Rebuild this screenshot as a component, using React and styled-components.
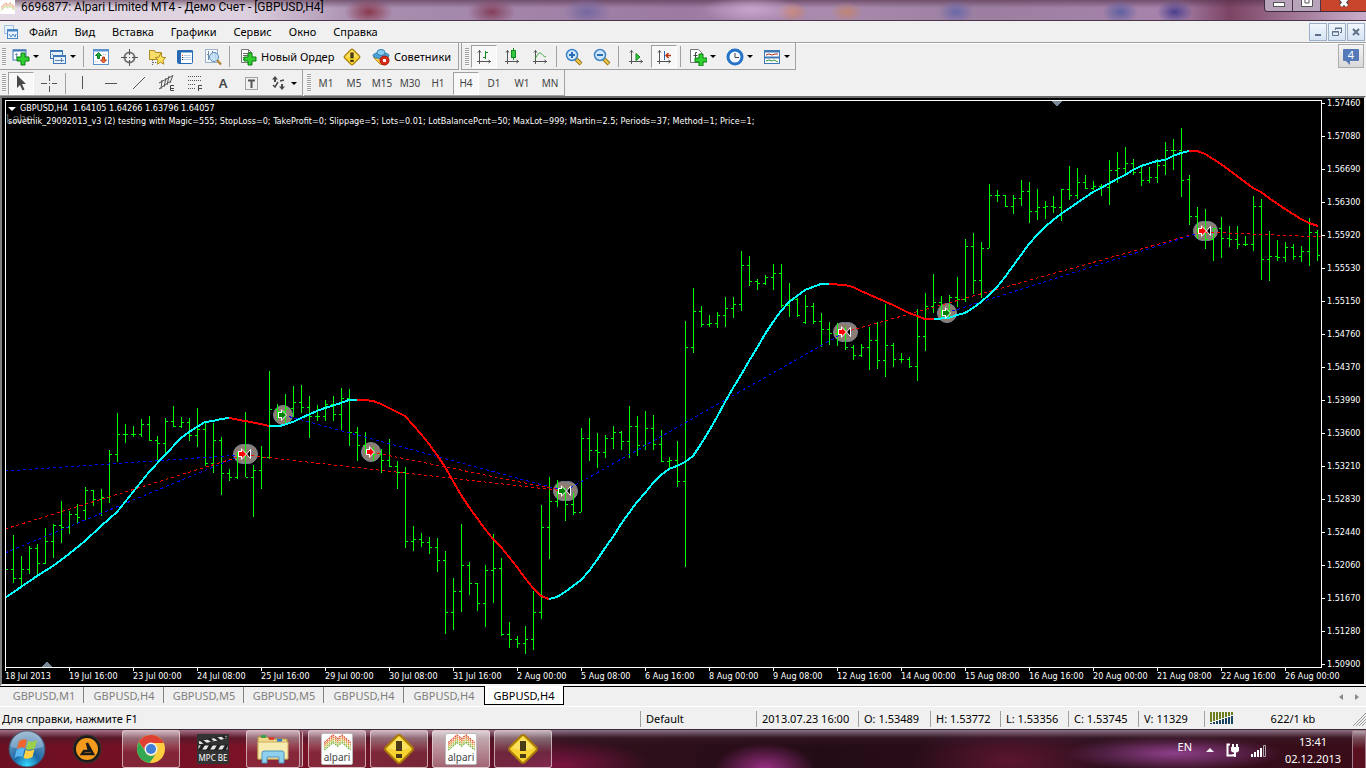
import React from "react";
import styled, { createGlobalStyle } from "styled-components";

// [high, low, close, open?] - open falls back to the previous close
const bars = [
  [563, 607, 569], [535, 583, 578], [556, 586, 569], [546, 574, 548], [544, 574, 563],
  [528, 564, 541], [524, 558, 525], [501, 543, 527], [511, 534, 514], [504, 523, 517],
  [487, 520, 490, 510], [490, 506, 499], [489, 516, 497], [450, 503, 454], [413, 462, 434],
  [424, 443, 434], [426, 437, 434], [419, 437, 424], [416, 441, 440], [436, 460, 443],
  [418, 455, 421], [406, 427, 426], [417, 428, 422], [418, 441, 435], [408, 447, 429],
  [423, 466, 463], [423, 473, 440], [437, 495, 473], [469, 481, 477], [452, 479, 455],
  [412, 477, 477], [465, 517, 470], [446, 489, 457], [371, 459, 409], [404, 420, 411],
  [394, 425, 408], [386, 417, 402], [385, 413, 407], [396, 438, 416], [405, 421, 416],
  [400, 421, 404], [396, 421, 414], [388, 430, 398], [389, 446, 432], [427, 461, 445],
  [432, 453, 450], [447, 461, 454], [449, 473, 460], [439, 467, 466], [461, 489, 472],
  [467, 548, 541], [526, 551, 539], [533, 547, 542], [537, 554, 547], [538, 572, 560],
  [551, 634, 612], [578, 630, 591], [524, 612, 565], [562, 595, 583], [583, 611, 603],
  [565, 627, 570], [534, 603, 568], [558, 636, 634], [622, 648, 639], [636, 648, 643],
  [626, 654, 639], [591, 650, 612], [505, 619, 527], [477, 559, 501], [480, 507, 493],
  [488, 521, 504], [493, 515, 512], [428, 512, 438], [418, 461, 450], [433, 468, 452],
  [435, 458, 438], [426, 449, 432], [431, 450, 441], [406, 458, 426], [416, 456, 445],
  [411, 450, 428], [415, 450, 444], [430, 462, 461], [457, 468, 460], [441, 487, 481],
  [321, 567, 347], [288, 353, 311], [306, 327, 324], [315, 327, 323], [312, 328, 315],
  [297, 327, 308], [297, 318, 304], [251, 311, 265], [256, 286, 281], [279, 290, 283],
  [275, 285, 277], [264, 290, 273], [264, 308, 305], [283, 317, 299], [298, 317, 315],
  [295, 324, 306, 322], [303, 324, 321], [313, 347, 329], [322, 345, 333], [323, 346, 332],
  [327, 350, 347], [345, 360, 355], [344, 357, 347], [327, 370, 340], [322, 369, 360],
  [304, 377, 345], [343, 367, 359], [353, 363, 359], [357, 368, 366], [309, 381, 336],
  [293, 351, 306], [274, 313, 302], [296, 317, 310], [295, 317, 297], [277, 307, 299],
  [239, 302, 246], [233, 294, 280], [242, 298, 248], [184, 248, 195], [190, 202, 195],
  [195, 207, 206], [195, 214, 198], [180, 206, 191], [182, 223, 211], [189, 220, 207],
  [201, 219, 206], [196, 213, 207], [189, 221, 189], [166, 200, 195], [168, 199, 182],
  [175, 189, 188], [181, 190, 186], [184, 196, 187], [160, 205, 170], [152, 183, 168],
  [147, 173, 163], [159, 175, 172], [167, 186, 180], [167, 183, 177], [159, 183, 165],
  [142, 175, 150], [139, 170, 150], [128, 197, 180], [175, 225, 216, 179], [207, 239, 231],
  [209, 249, 239], [228, 261, 228], [217, 258, 238], [226, 247, 239], [226, 249, 244],
  [236, 246, 244], [196, 251, 206], [199, 280, 259], [231, 281, 256], [240, 261, 257],
  [242, 262, 247], [244, 260, 256], [246, 262, 251], [218, 266, 232], [230, 261, 255],
];

const barPath = bars
  .map(([high, low, close, open], i) => {
    const x = 5 + i * 8;
    const o = open || (i > 0 ? bars[i - 1][2] : null);
    const left = o ? `M${x - 2} ${o}h2v1h-2z` : "";
    return `M${x} ${high}h1V${low}h-1z${left}M${x + 1} ${close}h2v1h-2z`;
  })
  .join("");

const averages = [
  { up: true, points: "5,598 21,587 37,576 53,566 69,554 85,541 101,526 117,512 133,492 149,472 165,455 181,438 189,432 197,427 205,422 213,421 221,419 230,418" },
  { up: false, points: "229,418 245,421 261,424 269,426" },
  { up: true, points: "269,426 280,426 293,422 301,418 317,411 325,408 341,403 349,400 357,400" },
  { up: false, points: "357,400 365,400 373,401 381,404 389,408 405,416 413,425 421,434 429,444 437,455 445,467 453,481 461,495 469,507 477,518 485,529 493,539 501,547 509,557 517,567 525,578 533,588 541,596 549,599" },
  { up: true, points: "549,599 557,597 565,592 581,580 589,571 597,560 605,548 613,537 621,524 629,513 637,502 645,493 653,483 661,475 669,469 677,466 685,462 693,456 701,444 709,431 717,417 725,402 733,388 741,375 749,361 757,348 765,334 773,322 781,311 789,302 797,296 805,290 813,287 821,284 829,284" },
  { up: false, points: "829,284 845,285 853,287 861,291 877,298 893,305 909,313 917,316 925,319 934,319" },
  { up: true, points: "934,319 949,318 957,315 965,313 973,308 981,302 989,295 997,287 1005,277 1013,266 1021,255 1029,244 1037,235 1045,227 1053,220 1061,214 1077,203 1093,192 1101,188 1117,179 1125,175 1133,170 1141,166 1157,161 1165,160 1173,156 1181,153 1189,151" },
  { up: false, points: "1189,151 1197,151 1205,154 1213,159 1221,164 1237,176 1253,188 1261,192 1269,198 1285,209 1301,219 1309,223 1318,226" },
];

const trades = [
  ["blue", 5, 471, 242, 455],
  ["red", 5, 529, 245, 455],
  ["blue", 5, 553, 240, 456],
  ["red", 245, 455, 565, 491],
  ["blue", 283, 415, 565, 491],
  ["red", 371, 452, 565, 491],
  ["blue", 565, 491, 845, 332],
  ["red", 845, 332, 1205, 231],
  ["blue", 946, 313, 1205, 231],
  ["red", 1205, 232, 1321, 237],
];

const markers = [
  { x: 283, y: 415, color: "green" },
  { x: 243, y: 454, color: "red", exit: true },
  { x: 371, y: 452, color: "red" },
  { x: 563, y: 491, color: "green", exit: true },
  { x: 843, y: 332, color: "red", exit: true },
  { x: 947, y: 313, color: "green" },
  { x: 1203, y: 231, color: "red", exit: true },
];

const prices = [
  "1.57460", "1.57080", "1.56690", "1.56300", "1.55920", "1.55530", "1.55150", "1.54760", "1.54370",
  "1.53990", "1.53600", "1.53210", "1.52830", "1.52440", "1.52060", "1.51670", "1.51280", "1.50900",
];

const dates = [
  "18 Jul 2013", "19 Jul 16:00", "23 Jul 00:00", "24 Jul 08:00", "25 Jul 16:00", "29 Jul 00:00",
  "30 Jul 08:00", "31 Jul 16:00", "2 Aug 00:00", "5 Aug 08:00", "6 Aug 16:00", "8 Aug 00:00",
  "9 Aug 08:00", "12 Aug 16:00", "14 Aug 00:00", "15 Aug 08:00", "16 Aug 16:00", "20 Aug 00:00",
  "21 Aug 08:00", "22 Aug 16:00", "26 Aug 00:00",
];

const menus = ["Файл", "Вид", "Вставка", "Графики", "Сервис", "Окно", "Справка"];
const periods = ["M1", "M5", "M15", "M30", "H1", "H4", "D1", "W1", "MN"];
const tabs = ["GBPUSD,M1", "GBPUSD,H4", "GBPUSD,M5", "GBPUSD,M5", "GBPUSD,H4", "GBPUSD,H4", "GBPUSD,H4"];

const Icon = ({ size = 18, children }) => (
  <svg width={size} height={size} viewBox={`0 0 ${size} ${size}`} aria-hidden="true">
    {children}
  </svg>
);

const Plus = ({ x = 6, y = 6 }) => (
  <path
    d={`M${x + 4} ${y}h4v4h4v4h-4v4h-4v-4h-4v-4h4z`}
    fill="#2fd02f"
    stroke="#0a7d12"
  />
);

const Axes = () => (
  <path d="M4.500 2v14M2 13.500h14M3 4.500l1.500-2 1.500 2M13.500 12l2 1.500-2 1.500" fill="none" stroke="#555" />
);

const NewChart = () => (
  <Icon>
    <rect x="1" y="2" width="13" height="10" fill="#fff" stroke="#3d77b5" />
    <path d="M1 2.500h13" stroke="#3d77b5" strokeWidth="2" />
    <path d="M4.500 5v5M3 6.500h3" stroke="#7d9bb8" />
    <Plus x={5} y={5} />
  </Icon>
);

const Profiles = () => (
  <Icon>
    <rect x="1.500" y="2.500" width="12" height="8" fill="#e8f1fa" stroke="#3d77b5" />
    <path d="M1 3h13" stroke="#3d77b5" strokeWidth="2" />
    <rect x="4.500" y="7.500" width="12" height="8" fill="#e8f1fa" stroke="#3d77b5" />
    <path d="M4 8h13" stroke="#3d77b5" strokeWidth="2" />
    <path d="M3 6.500h1M6 12.500h9M12.500 10v4" stroke="#5d86ae" />
  </Icon>
);

const MarketWatch = () => (
  <Icon>
    <rect x="1.500" y="1.500" width="15" height="15" fill="#fff" stroke="#5b93cf" />
    <path d="M1 2.500h16" stroke="#5b93cf" strokeWidth="2" />
    <path d="M6.500 4.500l3 3h-2v3h-2v-3h-2z" fill="#1fae3a" stroke="#0b7a24" />
    <path d="M11.500 15l3-3h-2V9h-2v3h-2z" fill="#f0703a" stroke="#b83c12" />
    <path d="M11 6.500h4M3 13.500h4" stroke="#bbb" strokeDasharray="1 1" />
  </Icon>
);

const DataWindow = () => (
  <Icon>
    <circle cx="9.500" cy="9.500" r="5" fill="none" stroke="#777" strokeWidth="2" />
    <path d="M9.500 1v6M9.500 12v6M1 9.500h6M12 9.500h6" stroke="#555" />
    <path d="M9 9.500h1" stroke="#555" />
  </Icon>
);

const Navigator = () => (
  <Icon>
    <path d="M1.500 2.500h5l1 2h6v7h-12z" fill="#f7dd6a" stroke="#b08a1e" />
    <path d="M4.500 12v5M5 14.500h3" stroke="#666" strokeDasharray="1 1" />
    <path d="M12.500 5.500l1.600 3.700 3.600.4-2.700 2.600.8 4-3.300-2-3.300 2 .8-4-2.700-2.600 3.600-.4z" fill="#ffe45c" stroke="#b08a1e" />
  </Icon>
);

const Terminal = () => (
  <Icon>
    <rect x="1.500" y="2.500" width="15" height="13" rx="1" fill="#fff" stroke="#2769b3" />
    <path d="M1 3.500h16" stroke="#2769b3" strokeWidth="2" />
    <path d="M3.500 3v12" stroke="#2769b3" strokeWidth="3" />
    <path d="M6 7.500h1" stroke="#e03030" />
    <path d="M8 7.500h7M6 9.500h9M6 11.500h9" stroke="#b9cbe0" />
    <path d="M6 9.500h1M6 11.500h1" stroke="#333" />
  </Icon>
);

const Tester = () => (
  <Icon>
    <rect x="1.500" y="1.500" width="12" height="13" fill="#f5f8fb" stroke="#9db2c9" />
    <path d="M4.500 3v9M8.500 3v6M11.500 4v7M3 6.500h2M7 5.500h2" stroke="#7089a3" />
    <circle cx="10" cy="9" r="4.500" fill="#bfe0f8" fillOpacity=".85" stroke="#5d8fbf" />
    <path d="M13 12l4 4.500" stroke="#b08a3c" strokeWidth="2.500" />
  </Icon>
);

const NewOrder = () => (
  <Icon>
    <path d="M2.500 1.500h7l3 3v10h-10z" fill="#fff" stroke="#777" />
    <path d="M4 5.500h5M4 7.500h6M4 9.500h6M4 11.500h3" stroke="#666" />
    <path d="M9.500 1.500v3h3" fill="none" stroke="#777" />
    <Plus x={5} y={5} />
  </Icon>
);

const Warning = ({ size = 18 }) => (
  <svg width={size} height={size} viewBox="0 0 32 32" aria-hidden="true">
    <path d="M16 2q1 0 2 1l11 11q2 2 0 4L18 29q-2 2-4 0L3 18q-2-2 0-4L14 3q1-1 2-1z" fill="#f6d330" stroke="#a8790a" strokeWidth="2" />
    <path d="M16 4l11 11q-11 4-22 0z" fill="#ffef8c" opacity=".55" />
    <path d="M13 8h6v10h-6zM13 21h6v4h-6z" fill="#4a3a16" />
  </svg>
);

const Advisors = () => (
  <Icon>
    <path d="M1.500 9.500l7 7h4l4-7z" fill="#f5cf45" stroke="#b58a1e" />
    <ellipse cx="9" cy="7.500" rx="8" ry="3" fill="#4ba3d8" stroke="#2c7fb5" />
    <ellipse cx="9" cy="4.500" rx="4" ry="3" fill="#8acbf0" stroke="#2c7fb5" />
    <circle cx="12.500" cy="12.500" r="4.500" fill="#dc2a1a" stroke="#a51408" />
    <rect x="11" y="11" width="3" height="3" fill="#fff" />
  </Icon>
);

const BarChart = () => (
  <Icon>
    <Axes />
    <path d="M10.500 3v8M8 9.500h2M11 4.500h2" stroke="#118a1e" />
  </Icon>
);

const Candles = () => (
  <Icon>
    <Axes />
    <path d="M10.500 0v12" stroke="#118a1e" />
    <rect x="8.500" y="2.500" width="4" height="7" fill="#33c63f" stroke="#118a1e" />
  </Icon>
);

const LineChart = () => (
  <Icon>
    <Axes />
    <path d="M4 11c2-3 3-6 5-6s2 3 6 4" fill="none" stroke="#33a03c" />
  </Icon>
);

const Magnifier = ({ minus }) => (
  <Icon>
    <path d="M11 11l5 5" stroke="#9a7414" strokeWidth="4" />
    <path d="M11.500 11.500l4 4" stroke="#f2cf4a" strokeWidth="2" />
    <circle cx="7" cy="7" r="5.500" fill="#cfe7fb" stroke="#3c83c8" strokeWidth="1.500" />
    <path d={minus ? "M4 7h6" : "M4 7h6M7 4v6"} stroke="#2a6cb5" strokeWidth="2" />
  </Icon>
);

const AutoScroll = () => (
  <Icon>
    <Axes />
    <path d="M9 5.500l4 3.500-4 3.500z" fill="#33c63f" stroke="#118a1e" />
  </Icon>
);

const ChartShift = () => (
  <Icon>
    <Axes />
    <path d="M9.500 3v9" stroke="#2769b3" />
    <path d="M16 7.500h-5M13.500 5l-2.500 2.500 2.500 2.500" fill="none" stroke="#b8330f" strokeWidth="1.500" />
  </Icon>
);

const Indicators = () => (
  <Icon>
    <path d="M1.500 1.500h8l3 3v10h-11z" fill="#fff" stroke="#777" />
    <path d="M8 4.500H6.500V12M4.500 7.500h4" fill="none" stroke="#444" />
    <Plus x={6} y={6} />
  </Icon>
);

const Clock = () => (
  <Icon>
    <circle cx="9" cy="9" r="7" fill="#f4f9fe" stroke="#2473c8" strokeWidth="3" />
    <path d="M9 5v4.500h4" fill="none" stroke="#444" />
  </Icon>
);

const Templates = () => (
  <Icon>
    <rect x="1.500" y="2.500" width="15" height="13" fill="#fff" stroke="#3d77b5" />
    <path d="M1 3.500h16M1 9.500h16" stroke="#3d77b5" strokeWidth="2" />
    <path d="M3 7l3-1 3 1 3-1h3" fill="none" stroke="#b03020" />
    <path d="M3 13l3-1 3 1 2-1 4 2" fill="none" stroke="#33923c" />
  </Icon>
);

const Cursor = () => (
  <Icon>
    <path d="M5 1v13l3-3 2.500 5.500 2-1L10 10h4z" fill="#4a4a4a" />
  </Icon>
);

const Crosshair = () => (
  <Icon>
    <path d="M9.500 1v6M9.500 12v6M1 9.500h6M12 9.500h5M9 9.500h1" stroke="#555" />
  </Icon>
);

const VLine = () => (
  <Icon>
    <path d="M8.500 2v13" stroke="#555" />
  </Icon>
);

const HLine = () => (
  <Icon>
    <path d="M3 9.500h12" stroke="#555" />
  </Icon>
);

const TrendLine = () => (
  <Icon>
    <path d="M3 15L15 3" stroke="#555" />
  </Icon>
);

const Channel = () => (
  <Icon>
    <path d="M1 9L14 2M1 15l12-8M4 6l-1 9M8 4L6 13M11 2L9 11M15 1l-3 8" fill="none" stroke="#555" />
    <path d="M16 11.500h-3.500v5H16M13 14.500h3" fill="none" stroke="#444" />
  </Icon>
);

const Fibo = () => (
  <Icon>
    <path d="M2 2.500h14M2 6.500h14M2 10.500h8M2 14.500h8" stroke="#555" strokeDasharray="1 1" />
    <path d="M12.500 17v-5.500H16M13 14.500h3" fill="none" stroke="#444" />
  </Icon>
);

const LabelTool = () => (
  <Icon>
    <rect x="3.500" y="3.500" width="12" height="12" fill="none" stroke="#555" strokeDasharray="1 1" />
    <path d="M6 6.500h7M9.500 6v8" stroke="#555" strokeWidth="2" />
  </Icon>
);

const Arrows = () => (
  <Icon>
    <path d="M5 2l3 3.500h-2V8H4V5.500H2z" fill="#4a4a4a" />
    <path d="M12 16l3-3.500h-2V10h-2v2.500H9z" fill="#4a4a4a" />
    <path d="M3 11l2 2 3-5M10 7l4-1" fill="none" stroke="#4a4a4a" strokeWidth="1.500" />
  </Icon>
);

const AlpariWaves = ({ width, height }) => (
  <svg width={width} height={height} viewBox="0 0 30 20" aria-hidden="true">
    {["#dc4420", "#e66a2c", "#d9a034", "#a8b93a", "#6fae34"].map((color, i) => (
      <path
        key={color}
        d={`M1 ${9 + i * 2}l6-5 3-3 3 2 2 2 2-2 3-2 3 3 6 5`}
        fill="none"
        stroke={color}
        strokeWidth="1.200"
        strokeDasharray="2 1"
      />
    ))}
  </svg>
);

const Orb = () => (
  <svg width="38" height="38" viewBox="0 0 38 38" aria-hidden="true">
    <defs>
      <radialGradient id="orb" cx=".5" cy=".95" r=".9">
        <stop offset="0" stopColor="#36d9ff" />
        <stop offset=".4" stopColor="#1b6aa8" />
        <stop offset="1" stopColor="#7fa3c4" />
      </radialGradient>
    </defs>
    <circle cx="19" cy="19" r="18" fill="url(#orb)" stroke="#3c4f63" />
    <path d="M3 17a16 16 0 0132 0q-16 5-32 0z" fill="#fff" opacity=".25" />
    <path d="M11 11q4-3 8-1l-2 8q-4-2-8 1z" fill="#f0642d" />
    <path d="M20 11q5 2 9-1l-2 8q-5 3-9 1z" fill="#9bd04a" />
    <path d="M8.500 20q4-3 8-1l-2 8q-4-2-8 1z" fill="#5bb5f0" />
    <path d="M17.500 20q5 2 9-1l-2 8q-5 3-9 1z" fill="#ffd044" />
  </svg>
);

const Aimp = () => (
  <svg width="30" height="30" viewBox="0 0 30 30" aria-hidden="true">
    <circle cx="15" cy="15" r="14" fill="#1d1b1a" stroke="#3a3533" />
    <circle cx="15" cy="15" r="11" fill="#f39a1c" />
    <path d="M15 9l6 11H10l2-3h5z" fill="none" stroke="#1d1b1a" strokeWidth="2.500" />
  </svg>
);

const Chrome = () => (
  <svg width="30" height="30" viewBox="0 0 30 30" aria-hidden="true">
    <circle cx="15" cy="15" r="14" fill="#ffcd40" />
    <path d="M2.900 8A14 14 0 0127.600 9H15a6 6 0 00-5.500 8z" fill="#de4032" />
    <path d="M2.900 8a14 14 0 0010.600 21l6.500-9a6 6 0 01-10.200-2z" fill="#35a853" />
    <circle cx="15" cy="15" r="6.500" fill="#f2f2f2" />
    <circle cx="15" cy="15" r="5" fill="#3f7fd6" />
  </svg>
);

const Explorer = () => (
  <svg width="32" height="30" viewBox="0 0 32 30" aria-hidden="true">
    <path d="M1 3h9l2 2h18v20H1z" fill="#efd98b" stroke="#b89b48" />
    <path d="M4 1h5v3H4z" fill="#3aa04a" />
    <path d="M12 3h5v3h-5z" fill="#d8452e" />
    <path d="M20 5h5v3h-5z" fill="#2f7fd0" />
    <path d="M1 8h30v17H1z" fill="#f8ebb0" stroke="#c9ad5c" />
    <path d="M5 29V19q0-2 2-2h18q2 0 2 2v10h-5v-6H10v6z" fill="#8fd0ee" stroke="#4c96bd" />
  </svg>
);

const Clapper = () => (
  <svg width="32" height="17" viewBox="0 0 32 17" aria-hidden="true">
    <path d="M1 7L30 1v4L2 11z" fill="#e8e8e8" stroke="#222" />
    <path d="M3 7l4 3 3-1-4-3zM10 5l4 3 3-1-4-3zM17 4l4 3 3-1-4-3zM24 2l3 3 3-1-3-3z" fill="#222" />
    <path d="M1 11h30v5H1z" fill="#e8e8e8" stroke="#222" />
    <path d="M4 11h4l-3 5H1zM12 11h4l-3 5H9zM20 11h4l-3 5h-4zM28 11h3l-2 5h-4z" fill="#222" />
  </svg>
);

const ChatBubble = () => (
  <svg width="18" height="18" viewBox="0 0 18 18" aria-hidden="true">
    <path d="M1 2q0-1 1-1h14q1 0 1 1v10q0 1-1 1H8v4l-4-4H2q-1 0-1-1z" fill="#5478b8" />
  </svg>
);

const Volume = () => (
  <svg width="24" height="13" viewBox="0 0 24 13" shapeRendering="crispEdges" aria-hidden="true">
    {[0, 1, 2, 3, 4, 5, 6, 7].map((n) => (
      <g key={n}>
        <rect x={n * 3} y="0" width="2" height={10 - n} fill="#6b7d1c" />
        <rect x={n * 3} y={11 - n} width="2" height={n + 1} fill="#1c4560" />
      </g>
    ))}
  </svg>
);

const Marker = ({ x, y, color, exit }) => (
  <g transform={`translate(${x} ${y})`}>
    {exit && <path d="M7.500-4.500v9l-4-4.500z" fill="#000" stroke="#fff" />}
    <path d="M-5-3h3v-3l6 6-6 6v-3h-3z" fill="#fff" />
    <path d="M-4-2h3v-2l4 4-4 4v-2h-3z" fill={color} />
  </g>
);

const PriceChart = () => (
  <ChartSvg viewBox="6 101 1315 566" role="img" aria-label="GBPUSD,H4">
    {markers.map((m) => (
      <g key={m.x} fill="#8f7c70" stroke="#77879a">
        {m.exit && <circle cx={m.x + 5} cy={m.y} r="9.500" />}
        <circle cx={m.x} cy={m.y} r="9.500" />
      </g>
    ))}
    <g shapeRendering="crispEdges">
      <path d={barPath} fill="#0f0" />
      {trades.map(([color, x1, y1, x2, y2]) => (
        <line key={`${color}${x1}-${y1}`} x1={x1} y1={y1} x2={x2} y2={y2} stroke={color} strokeDasharray="3 3" />
      ))}
      {averages.map(({ up, points }) => (
        <polyline key={points} points={points} fill="none" stroke={up ? "#0ff" : "#f00"} strokeWidth="2" />
      ))}
      <path d="M1051 101h11l-5 5h-1z" fill="#778899" />
      <path d="M41 667h11l-5-5h-1z" fill="#778899" />
    </g>
    {markers.map((m) => (
      <Marker key={m.x} {...m} />
    ))}
  </ChartSvg>
);

const App = () => {
  return (
    <>
      <GlobalStyle />
      <Page>
        <TitleBar>
          <TitleIcon>
            <AlpariWaves width={14} height={12} />
          </TitleIcon>
          <Title>6696877: Alpari Limited MT4 - Демо Счет - [GBPUSD,H4]</Title>
          <WindowButtons>
            <WindowButton aria-label="Свернуть">
              <svg width="12" height="7" viewBox="0 0 12 7">
                <rect x=".5" y="2.500" width="11" height="4" fill="#fff" stroke="#555" />
              </svg>
            </WindowButton>
            <WindowButton aria-label="Развернуть">
              <svg width="12" height="7" viewBox="0 0 12 7">
                <path d="M.5 0v6.500h11V0M4 0v3h4V0" fill="#fff" stroke="#555" />
              </svg>
            </WindowButton>
            <WindowButton $close aria-label="Закрыть">
              <svg width="12" height="7" viewBox="0 0 12 7">
                <path d="M3-1l6 7M9-1L3 6" stroke="#444" strokeWidth="5" />
                <path d="M3-1l6 7M9-1L3 6" stroke="#fff" strokeWidth="3" />
              </svg>
            </WindowButton>
          </WindowButtons>
        </TitleBar>

        <MenuBar>
          <Icon size={16}>
            <rect x="1.500" y="1.500" width="9" height="8" fill="#eaf3fc" stroke="#5b93cf" strokeDasharray="1 1" />
            <rect x="4.500" y="5.500" width="10" height="9" fill="#eaf3fc" stroke="#4a87c8" />
            <path d="M4 6.500h11" stroke="#4a87c8" strokeWidth="2" />
            <path d="M6 10l2 3 2-3 2 3 1-3" fill="none" stroke="#4a87c8" />
          </Icon>
          <MenuItems>
            {menus.map((name) => (
              <MenuItem key={name}>{name}</MenuItem>
            ))}
          </MenuItems>
          <MdiButton aria-label="Свернуть график">
            <Icon size={12}>
              <path d="M3 9h6" stroke="#5d7088" strokeWidth="2" />
            </Icon>
          </MdiButton>
          <MdiButton aria-label="Восстановить график">
            <Icon size={12}>
              <path d="M4.500 4V2.500h6v4H9M4 2h7M1.500 5.500h6v4h-6zM1 6h7" fill="none" stroke="#5d7088" />
            </Icon>
          </MdiButton>
          <MdiButton aria-label="Закрыть график">
            <Icon size={12}>
              <path d="M3 3l6 6M9 3L3 9" stroke="#5d7088" strokeWidth="2" />
            </Icon>
          </MdiButton>
        </MenuBar>

        <ToolRow $tall>
          <Toolbar>
            <Grip />
            <ToolButton $drop aria-label="Новый график"><NewChart /></ToolButton>
            <ToolButton $drop aria-label="Профили"><Profiles /></ToolButton>
            <Divider />
            <ToolButton aria-label="Обзор рынка"><MarketWatch /></ToolButton>
            <ToolButton aria-label="Окно данных"><DataWindow /></ToolButton>
            <ToolButton aria-label="Навигатор"><Navigator /></ToolButton>
            <ToolButton aria-label="Терминал"><Terminal /></ToolButton>
            <ToolButton aria-label="Тестер"><Tester /></ToolButton>
            <Divider />
            <TextButton $width={105}><NewOrder />Новый Ордер</TextButton>
            <ToolButton aria-label="Предупреждение"><Warning /></ToolButton>
            <TextButton $width={92}><Advisors />Советники</TextButton>
          </Toolbar>
          <Toolbar $edge>
            <Grip />
            <ToolButton $pressed aria-label="Бары"><BarChart /></ToolButton>
            <ToolButton aria-label="Японские свечи"><Candles /></ToolButton>
            <ToolButton aria-label="Линия"><LineChart /></ToolButton>
            <Divider />
            <ToolButton aria-label="Увеличить"><Magnifier /></ToolButton>
            <ToolButton aria-label="Уменьшить"><Magnifier minus /></ToolButton>
            <Divider />
            <ToolButton aria-label="Автопрокрутка"><AutoScroll /></ToolButton>
            <ToolButton $pressed aria-label="Сдвиг графика"><ChartShift /></ToolButton>
            <Divider />
            <ToolButton $drop aria-label="Индикаторы"><Indicators /></ToolButton>
            <ToolButton $drop aria-label="Периоды"><Clock /></ToolButton>
            <ToolButton $drop aria-label="Шаблоны"><Templates /></ToolButton>
          </Toolbar>
          <ChatButton>
            <ChatBubble />
            <ChatCount>4</ChatCount>
          </ChatButton>
        </ToolRow>

        <ToolRow>
          <Toolbar>
            <Grip />
            <ToolButton $pressed aria-label="Курсор"><Cursor /></ToolButton>
            <ToolButton aria-label="Перекрестие"><Crosshair /></ToolButton>
            <Divider />
            <ToolButton aria-label="Вертикальная линия"><VLine /></ToolButton>
            <ToolButton aria-label="Горизонтальная линия"><HLine /></ToolButton>
            <ToolButton aria-label="Трендовая линия"><TrendLine /></ToolButton>
            <ToolButton aria-label="Канал"><Channel /></ToolButton>
            <ToolButton aria-label="Фибоначчи"><Fibo /></ToolButton>
            <ToolButton $bold>A</ToolButton>
            <ToolButton aria-label="Метка"><LabelTool /></ToolButton>
            <ToolButton $drop aria-label="Стрелки"><Arrows /></ToolButton>
          </Toolbar>
          <Toolbar>
            <Grip />
            {periods.map((period) => (
              <ToolButton key={period} $pressed={period === "H4"}>{period}</ToolButton>
            ))}
          </Toolbar>
        </ToolRow>

        <ChartWindow>
          <ChartRow>
            <Plot>
              <PriceChart />
              <ChartLabel>Label</ChartLabel>
              <ChartCaption>
                <span><Caret />GBPUSD,H4&nbsp; 1.64105 1.64266 1.63796 1.64057</span>
                <span>
                  sovetnik_29092013_v3 (2) testing with Magic=555; StopLoss=0; TakeProfit=0; Slippage=5; Lots=0.01;
                  LotBalancePcnt=50; MaxLot=999; Martin=2.5; Periods=37; Method=1; Price=1;
                </span>
              </ChartCaption>
            </Plot>
            <PriceAxis>
              {prices.map((price) => (
                <Price key={price}>{price}</Price>
              ))}
            </PriceAxis>
          </ChartRow>
          <TimeAxis>
            {dates.map((date) => (
              <Time key={date}>{date}</Time>
            ))}
          </TimeAxis>
        </ChartWindow>

        <TabBar>
          {tabs.map((name, i) => (
            <Tab key={i} $active={i === 6} $last={i === 5}>{name}</Tab>
          ))}
          <TabScroll>
            <Icon size={8}><path d="M6 1v6L2 4z" fill="#8a8a8a" /></Icon>
            <Icon size={8}><path d="M2 1v6l4-3z" fill="#8a8a8a" /></Icon>
          </TabScroll>
        </TabBar>

        <StatusBar>
          <StatusHelp>Для справки, нажмите F1</StatusHelp>
          <StatusCell $width={116}>Default</StatusCell>
          <StatusCell $width={102}>2013.07.23 16:00</StatusCell>
          <StatusCell $width={72}>O: 1.53489</StatusCell>
          <StatusCell $width={70}>H: 1.53772</StatusCell>
          <StatusCell $width={68}>L: 1.53356</StatusCell>
          <StatusCell $width={70}>C: 1.53745</StatusCell>
          <StatusCell $width={66}>V: 11329</StatusCell>
          <StatusCell $width={162}>
            <Volume />
            <Traffic>622/1 kb</Traffic>
            <Icon size={14}>
              <path d="M1 14L14 1M4 14L14 4M7 14l7-7M10 14l4-4" stroke="#999" />
            </Icon>
          </StatusCell>
        </StatusBar>

        <TaskBar>
          <TaskItem $plain $width={50} aria-label="Пуск"><Orb /></TaskItem>
          <TaskItem $plain $width={62} aria-label="AIMP"><Aimp /></TaskItem>
          <TaskItem aria-label="Chrome"><Chrome /></TaskItem>
          <TaskItem $plain>
            <Mpc>
              <Clapper />
              <span>MPC BE</span>
            </Mpc>
          </TaskItem>
          <TaskItem $stack $width={54} aria-label="Проводник"><Explorer /></TaskItem>
          <TaskItem>
            <AlpariTile>
              <AlpariWaves width={29} height={19} />
              alpari
            </AlpariTile>
          </TaskItem>
          <TaskItem aria-label="Терминал"><Warning size={32} /></TaskItem>
          <TaskItem $active>
            <AlpariTile>
              <AlpariWaves width={29} height={19} />
              alpari
            </AlpariTile>
          </TaskItem>
          <TaskItem aria-label="Терминал"><Warning size={32} /></TaskItem>
          <Tray>
            <Lang>EN</Lang>
            <Icon size={8}><path d="M0 6l4-4 4 4z" fill="#eee" /></Icon>
            <Icon size={16}>
              <path d="M6 2.500H3.500v11h6V12" fill="none" stroke="#fff" strokeWidth="2" />
              <path d="M7 5h8v3q0 2-3 2.500V15h-2v-4.500Q7 10 7 8zM8 2h2v3H8zM12 2h2v3h-2z" fill="#fff" />
            </Icon>
            <Icon size={16}>
              <path d="M1 12h2v3H1zM4 10h2v5H4zM7 8h2v7H7zM10 6h2v9h-2z" fill="#fff" />
              <path d="M13.500 3.500h2v11h-2z" fill="none" stroke="#aaa" />
            </Icon>
            <TrayClock>
              <span>13:41</span>
              <span>02.12.2013</span>
            </TrayClock>
          </Tray>
          <ShowDesktop aria-label="Рабочий стол" />
        </TaskBar>
      </Page>
    </>
  );
};

const GlobalStyle = createGlobalStyle`
  * {
    box-sizing: border-box;
  }
  body {
    margin: 0;
    background: #f0f0f0;
    color: #000;
    font-family: "Noto Sans", "Liberation Sans", sans-serif;
    font-size: 11px;
  }
  button {
    margin: 0;
    padding: 0;
    border: none;
    background: none;
    color: inherit;
    font: inherit;
  }
  svg {
    display: block;
    flex: none;
  }
`;
const Page = styled.div`
  display: flex;
  flex-direction: column;
  min-height: 100vh;
`;
const TitleBar = styled.header`
  display: flex;
  align-items: flex-start;
  height: 21px;
  border-bottom: 1px solid #4a3548;
  background:
    radial-gradient(ellipse 24px 14px at 27% 60%, #8a3a4e 0%, transparent 100%),
    radial-gradient(ellipse 24px 14px at 36% 60%, #84405c 0%, transparent 100%),
    radial-gradient(ellipse 24px 14px at 43% 60%, #7468a0 0%, transparent 100%),
    radial-gradient(ellipse 50px 14px at 55% 50%, #c8a4cc 0%, transparent 100%),
    radial-gradient(ellipse 16px 10px at 58% 60%, #c88470 0%, transparent 100%),
    radial-gradient(ellipse 16px 10px at 62% 60%, #c08474 0%, transparent 100%),
    radial-gradient(ellipse 18px 12px at 70% 60%, #6a68a8 0%, transparent 100%),
    radial-gradient(ellipse 18px 12px at 82% 60%, #5f5fa0 0%, transparent 100%),
    radial-gradient(ellipse 18px 12px at 86% 60%, #4a3f8c 0%, transparent 100%),
    linear-gradient(to bottom, rgba(80, 45, 70, 0.6) 0, rgba(80, 45, 70, 0) 8px),
    linear-gradient(to right, #e6dce8 0, #ddd0de 18%, #a98fb0 26%, #9c7aa2 50%, #a98bae 60%, #9c7fa0 72%, #a783ac 86%, #7c4464 90%, #c9aecb 100%);
`;
const TitleIcon = styled.span`
  display: flex;
  align-items: center;
  justify-content: center;
  width: 15px;
  height: 14px;
  background: #fff;
`;
const Title = styled.h1`
  flex: 1;
  margin: 0;
  padding-left: 6px;
  font-family: Roboto, "Noto Sans", sans-serif;
  font-size: 12px;
  font-weight: 400;
  line-height: 14px;
`;
const WindowButtons = styled.div`
  display: flex;
  border: 1px solid #3d2c3d;
  border-top: none;
  border-right: none;
  border-radius: 0 0 0 4px;
  overflow: hidden;
`;
const WindowButton = styled.button`
  display: flex;
  justify-content: center;
  width: ${({ $close }) => ($close ? 45 : 28)}px;
  height: 11px;
  border-right: ${({ $close }) => ($close ? "none" : "1px solid #4a3548")};
  background: ${({ $close }) => ($close ? "#c8452c" : "#b8a4ba")};
`;
const MenuBar = styled.nav`
  display: flex;
  align-items: center;
  gap: 1px;
  height: 22px;
  padding: 0 1px 0 3px;
  border-bottom: 1px solid #a0a0a0;
  box-shadow: 0 1px 0 #fff;
`;
const MenuItems = styled.div`
  display: flex;
  flex: 1;
`;
const MenuItem = styled.button`
  padding: 0 8px 0 9px;
  line-height: 18px;
`;
const MdiButton = styled.button`
  display: flex;
  align-items: center;
  justify-content: center;
  width: 18px;
  height: 18px;
  border: 1px solid #9bb0c8;
  background: linear-gradient(#f2f7fd, #d5e4f5);
`;
const ToolRow = styled.div`
  display: flex;
  gap: 1px;
  height: ${({ $tall }) => ($tall ? 27 : 26)}px;
`;
const Toolbar = styled.div`
  display: flex;
  align-items: center;
  padding: 1px 0 0 3px;
  border-right: 1px solid #a0a0a0;
  border-bottom: 1px solid #a0a0a0;
  border-left: ${({ $edge }) => ($edge ? "1px solid #a0a0a0" : "none")};
  margin-left: ${({ $edge }) => ($edge ? 1 : 0)}px;

  &:first-child {
    padding-left: 2px;
  }
`;
const Grip = styled.span`
  width: 4px;
  height: 18px;
  margin-right: 1px;
  background: repeating-linear-gradient(#a0a0a0 0 1px, #f8f8f8 1px 2px);
`;
const ToolButton = styled.button`
  display: flex;
  align-items: center;
  justify-content: ${({ $drop }) => ($drop ? "flex-start" : "center")};
  width: ${({ $drop }) => ($drop ? 37 : 26)}px;
  height: 23px;
  margin: ${({ $drop }) => ($drop ? "0" : "0 1px")};
  padding-left: ${({ $drop }) => ($drop ? 4 : 0)}px;
  border: 1px solid transparent;
  border-color: ${({ $pressed }) => ($pressed ? "#a0a0a0 #fff #fff #a0a0a0" : "transparent")};
  background: ${({ $pressed }) => ($pressed ? "#f8f8f8" : "none")};
  color: #444;
  font-size: ${({ $bold }) => ($bold ? 13 : 10)}px;
  font-weight: ${({ $bold }) => ($bold ? 600 : 400)};

  &::after {
    content: "";
    display: ${({ $drop }) => ($drop ? "block" : "none")};
    margin-left: 3px;
    border: 3px solid transparent;
    border-top-color: #000;
    border-bottom: none;
  }
`;
const TextButton = styled.button`
  display: flex;
  align-items: center;
  gap: 4px;
  width: ${({ $width }) => $width}px;
  height: 23px;
  padding-left: 6px;
  white-space: nowrap;
`;
const Divider = styled.span`
  width: 1px;
  height: 21px;
  margin: 0 3px 0 2px;
  background: #a0a0a0;
`;
const ChatButton = styled.button`
  position: relative;
  width: 26px;
  height: 24px;
  margin: 1px 2px 0 auto;
  padding: 3px;
  border: 1px solid #adadad;
  background: linear-gradient(#f4f4f4, #d8d8d8);
`;
const ChatCount = styled.span`
  position: absolute;
  inset: 3px 0 auto 0;
  color: #fff;
  line-height: 14px;
`;
const ChartWindow = styled.main`
  border: 2px solid #808080;
  border-top-color: #6a6a6a;
  border-right: 2px solid #f4f4f4;
  border-bottom: 2px solid #f4f4f4;
  background: #000;
  color: #fff;
  font-family: "DejaVu Sans Condensed", "Noto Sans", sans-serif;
  font-size: 9px;
  line-height: 11px;
`;
const ChartRow = styled.div`
  display: flex;
  padding-left: 3px;
`;
const Plot = styled.div`
  position: relative;
  flex: 1;
  margin: 2px 0;
  border: 1px solid #fff;
`;
const ChartSvg = styled.svg`
  width: 100%;
  height: auto;
`;
const ChartLabel = styled.span`
  position: absolute;
  top: 11px;
  left: 0;
  color: #6a6a6a;
  font-family: "Liberation Sans", Arial, sans-serif;
  font-size: 12px;
  line-height: 14px;
`;
const ChartCaption = styled.div`
  position: absolute;
  top: 1px;
  left: 2px;
  display: grid;
  line-height: 13px;
`;
const Caret = styled.i`
  display: inline-block;
  margin-right: 4px;
  border: 4px solid transparent;
  border-top-color: #fff;
  border-bottom: none;
  vertical-align: middle;
`;
const PriceAxis = styled.div`
  display: flex;
  flex-direction: column;
  justify-content: space-between;
  width: 42px;
`;
const Price = styled.span`
  display: flex;
  align-items: center;
  gap: 2px;

  &::before {
    content: "";
    width: 3px;
    height: 1px;
    background: #fff;
  }
`;
const TimeAxis = styled.div`
  display: flex;
  height: 16px;
  margin-top: -2px;
  padding-left: 3px;
`;
const Time = styled.span`
  flex: 0 0 64px;
  line-height: 11px;
  white-space: nowrap;

  &::before {
    content: "";
    display: block;
    width: 1px;
    height: 3px;
    background: #fff;
  }
`;
const TabBar = styled.div`
  display: flex;
  height: 21px;
  padding-left: 4px;
  border-top: 1px solid #000;
  border-bottom: 1px solid #fff;
`;
const Tab = styled.button`
  width: 80px;
  height: ${({ $active }) => ($active ? 19 : 16)}px;
  margin-top: ${({ $active }) => ($active ? -1 : 0)}px;
  border: ${({ $active }) => ($active ? "1px solid #000" : "none")};
  border-top: none;
  background: ${({ $active }) => ($active ? "#fff" : "none")};
  color: ${({ $active }) => ($active ? "#000" : "#808080")};
  box-shadow: ${({ $active, $last }) => ($active || $last ? "none" : "inset -1px 0 0 #808080")};
`;
const TabScroll = styled.div`
  display: flex;
  align-items: center;
  gap: 8px;
  margin-left: auto;
  padding-right: 5px;
`;
const StatusBar = styled.footer`
  display: flex;
  align-items: center;
  height: 22px;
  padding-top: 1px;
  line-height: 16px;
`;
const StatusHelp = styled.span`
  flex: 1;
  padding-left: 2px;
`;
const StatusCell = styled.span`
  display: flex;
  align-items: center;
  width: ${({ $width }) => $width}px;
  padding-left: 5px;
  border-left: 1px solid #a0a0a0;
  white-space: nowrap;
`;
const Traffic = styled.span`
  flex: 1;
  text-align: center;
`;
const TaskBar = styled.div`
  display: flex;
  height: 40px;
  border-top: 1px solid #3a2a36;
  background:
    linear-gradient(to bottom, rgba(200, 180, 205, 0.6) 0, rgba(60, 30, 45, 0.5) 8px, rgba(60, 30, 45, 0) 16px),
    radial-gradient(ellipse 90px 26px at 41% 90%, #7a1440 0%, transparent 100%),
    radial-gradient(ellipse 50px 26px at 56% 100%, #9c2f86 0%, transparent 100%),
    radial-gradient(ellipse 110px 18px at 86% 60%, #8e3f8a 0%, transparent 100%),
    radial-gradient(ellipse 100px 40px at 74% 80%, #5c1530 0%, transparent 100%),
    linear-gradient(to right, #6d0f22 0, #7d1226 20%, #5e1224 36%, #30101c 42%, #240c16 60%, #2c0f1c 80%, #3a0c18 100%);
`;
const TaskItem = styled.button`
  display: flex;
  align-items: center;
  justify-content: center;
  width: ${({ $width }) => $width || 58}px;
  height: 38px;
  margin: 0 ${({ $stack }) => ($stack ? 6 : 2)}px 0 2px;
  border: 1px solid ${({ $plain }) => ($plain ? "transparent" : "rgba(235, 215, 220, 0.7)")};
  border-radius: 3px;
  background: ${({ $plain, $active }) => {
    if ($plain) return "none";
    return $active
      ? "linear-gradient(rgba(255, 255, 255, 0.7), rgba(255, 225, 230, 0.4))"
      : "linear-gradient(rgba(255, 255, 255, 0.5), rgba(255, 220, 225, 0.1) 60%)";
  }};
  box-shadow: ${({ $stack }) => ($stack ? "3px 0 0 -1px #7c3a48, 4px 0 0 -1px #d8b0b8" : "none")};
`;
const Mpc = styled.span`
  display: flex;
  flex-direction: column;
  width: 32px;
  background: #333;
  color: #fff;
  font-size: 8px;
  line-height: 13px;
  white-space: nowrap;
`;
const AlpariTile = styled.span`
  display: flex;
  flex-direction: column;
  align-items: center;
  width: 32px;
  height: 32px;
  border: 1px solid #bbb;
  border-radius: 2px;
  background: #fff;
  color: #444;
  font-size: 10px;
  line-height: 9px;
`;
const Tray = styled.div`
  display: flex;
  align-items: center;
  gap: 10px;
  margin-left: auto;
  color: #fff;
`;
const Lang = styled.span`
  padding: 0 4px 6px 0;
`;
const TrayClock = styled.time`
  display: grid;
  gap: 2px;
  width: 74px;
  font-size: 11px;
  line-height: 15px;
  text-align: center;
`;
const ShowDesktop = styled.button`
  width: 14px;
  margin-left: 2px;
  border: 1px solid #a07a88;
  background: linear-gradient(rgba(255, 255, 255, 0.4), rgba(120, 20, 40, 0.5) 50%);
`;

export default App;
